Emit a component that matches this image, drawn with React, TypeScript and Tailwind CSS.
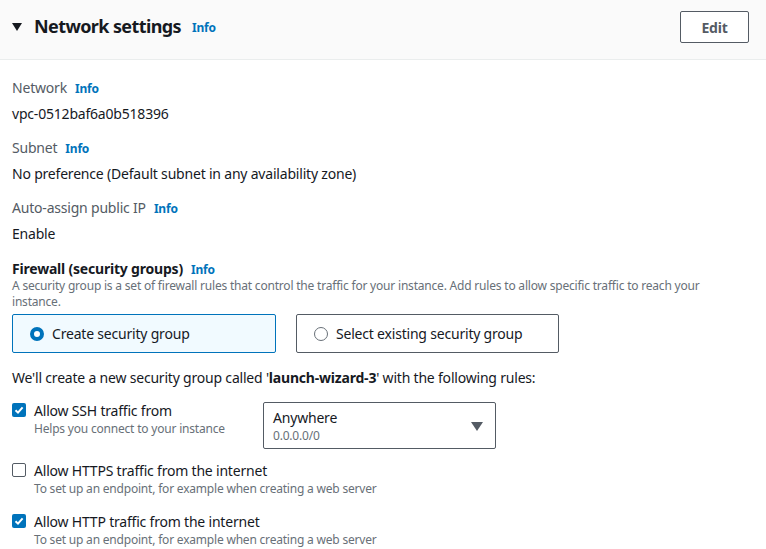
import { useState } from "react";

function InfoLink() {
    return <a href="#" className="text-[12px] font-bold text-[#0073bb] ml-[8px]">Info</a>;
}

function CheckBox({ checked }: { checked: boolean }) {
    if (checked) {
        return (
            <span className="w-[14px] h-[14px] rounded-[2px] bg-[#0073bb] flex items-center justify-center shrink-0">
                <svg width="10" height="10" viewBox="0 0 10 10">
                    <path d="M1.5 5.2 L4 7.6 L8.6 2.4" fill="none" stroke="white" strokeWidth="2" />
                </svg>
            </span>
        );
    }
    return <span className="w-[14px] h-[14px] rounded-[2px] border border-[#545b64] bg-white shrink-0" />;
}

function Field({ label, value }: { label: string; value: string }) {
    return (
        <div className="flex flex-col">
            <div className="flex items-baseline h-[20px] text-[14px] text-[#545b64]">
                {label}
                <InfoLink />
            </div>
            <div className="mt-[6px] h-[20px] text-[14px] text-[#16191f]">{value}</div>
        </div>
    );
}

function Rule({ checked, title, desc }: { checked: boolean; title: string; desc: string }) {
    return (
        <div className="flex flex-col">
            <div className="flex items-center gap-[8px] h-[20px]">
                <CheckBox checked={checked} />
                <span className="text-[14px] text-[#16191f]">{title}</span>
            </div>
            <div className="pl-[22px] mt-[1px] text-[12px] leading-[16px] text-[#687078]">{desc}</div>
        </div>
    );
}

export default function App() {
    const [ mode, setMode ] = useState("create");

    return (
        <div className="w-[766px] h-[549px] bg-white overflow-hidden tracking-[-0.2px]" style={{ fontFamily: '"Noto Sans", sans-serif' }}>
            <div className="flex items-start justify-between h-[60px] bg-[#fafafa] border-b border-[#eaeded] pl-[12px] pr-[17px] pt-[11px]">
                <div className="flex items-center h-[31px]">
                    <svg width="10" height="8" viewBox="0 0 10 8" className="mr-[12px]">
                        <path d="M0 0 H10 L5 8 Z" fill="#16191f" />
                    </svg>
                    <h2 className="text-[18px] font-bold text-[#16191f] tracking-[-0.6px]">Network settings</h2>
                    <a href="#" className="text-[12px] font-bold text-[#0073bb] ml-[11px] mt-[3px]">Info</a>
                </div>
                <button className="w-[69px] h-[32px] border border-[#545b64] rounded-[2px] bg-white text-[14px] font-bold text-[#545b64]">Edit</button>
            </div>

            <div className="flex flex-col px-[12px] pt-[17px]">
                <Field label="Network" value="vpc-0512baf6a0b518396" />
                <div className="mt-[14px]"><Field label="Subnet" value="No preference (Default subnet in any availability zone)" /></div>
                <div className="mt-[14px]"><Field label="Auto-assign public IP" value="Enable" /></div>

                <div className="mt-[15px] flex items-baseline h-[20px]">
                    <span className="text-[14px] font-bold text-[#16191f]">Firewall (security groups)</span>
                    <InfoLink />
                </div>
                <p className="text-[12px] leading-[16px] text-[#687078] max-w-[700px]">
                    A security group is a set of firewall rules that control the traffic for your instance. Add rules to allow specific traffic to reach your instance.
                </p>

                <div className="flex gap-[20px] mt-[4px]">
                    <button
                        onClick={() => setMode("create")}
                        className={"flex items-center gap-[8px] w-[264px] h-[39px] px-[17px] rounded-[2px] border text-[14px] text-[#16191f] " + (mode === "create" ? "bg-[#f1faff] border-[#0073bb]" : "bg-white border-[#545b64]")}
                    >
                        <span className={"w-[14px] h-[14px] rounded-full shrink-0 " + (mode === "create" ? "border-[4px] border-[#0073bb] bg-white" : "border-[1.5px] border-[#687078] bg-white")} />
                        Create security group
                    </button>
                    <button
                        onClick={() => setMode("select")}
                        className={"flex items-center gap-[8px] w-[263px] h-[39px] px-[17px] rounded-[2px] border text-[14px] text-[#16191f] " + (mode === "select" ? "bg-[#f1faff] border-[#0073bb]" : "bg-white border-[#545b64]")}
                    >
                        <span className={"w-[14px] h-[14px] rounded-full shrink-0 " + (mode === "select" ? "border-[4px] border-[#0073bb] bg-white" : "border-[1.5px] border-[#687078] bg-white")} />
                        Select existing security group
                    </button>
                </div>

                <p className="mt-[14px] text-[14px] text-[#16191f] h-[20px]">
                    We'll create a new security group called '<b>launch-wizard-3</b>' with the following rules:
                </p>

                <div className="flex items-start mt-[13px]">
                    <div className="w-[251px]">
                        <Rule checked title="Allow SSH traffic from" desc="Helps you connect to your instance" />
                    </div>
                    <div className="flex items-start justify-between w-[233px] h-[47px] mt-[2px] border border-[#545b64] rounded-[2px] pl-[9px] pr-[12px] pt-[5px]">
                        <div className="flex flex-col">
                            <span className="text-[14px] leading-[20px] text-[#16191f]">Anywhere</span>
                            <span className="text-[12px] leading-[16px] text-[#687078]">0.0.0.0/0</span>
                        </div>
                        <svg width="12" height="9" viewBox="0 0 12 9" className="mt-[14px]">
                            <path d="M0 0 H12 L6 9 Z" fill="#545b64" />
                        </svg>
                    </div>
                </div>

                <div className="mt-[11px]">
                    <Rule checked={false} title="Allow HTTPS traffic from the internet" desc="To set up an endpoint, for example when creating a web server" />
                </div>
                <div className="mt-[14px]">
                    <Rule checked title="Allow HTTP traffic from the internet" desc="To set up an endpoint, for example when creating a web server" />
                </div>
            </div>
        </div>
    );
}
